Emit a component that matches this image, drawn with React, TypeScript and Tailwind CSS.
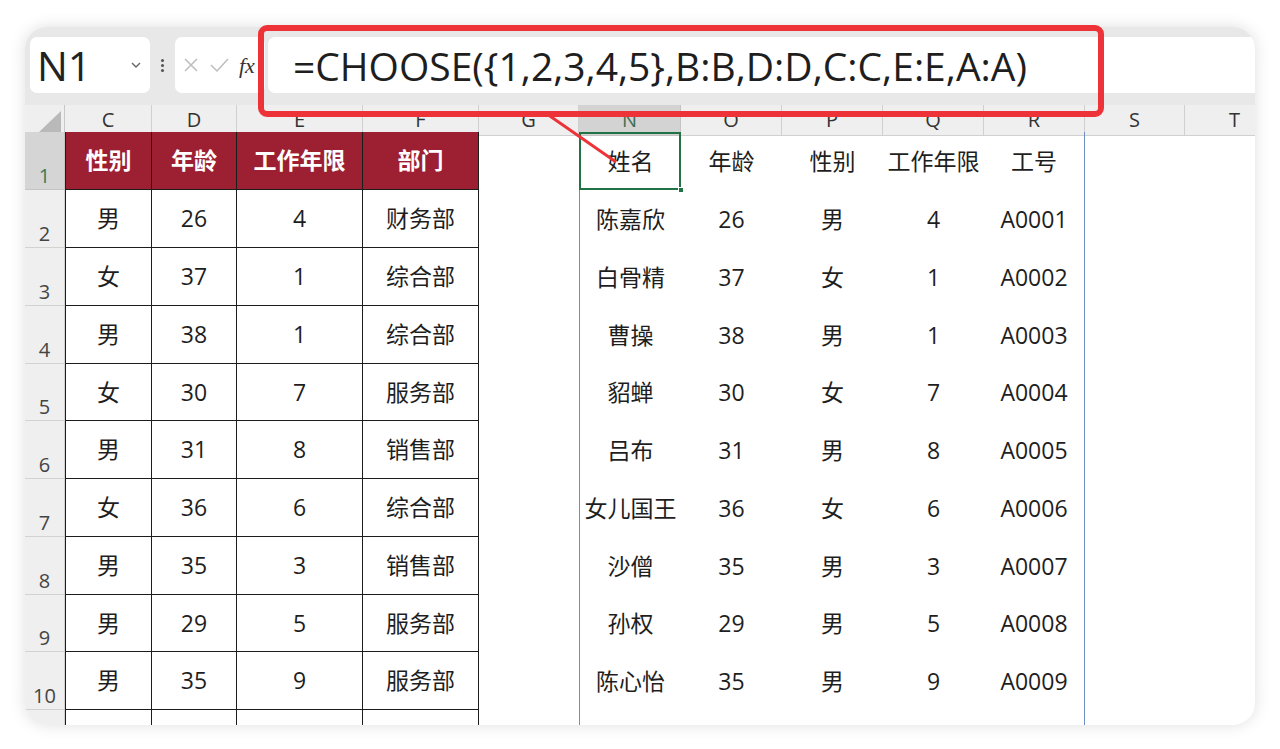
import React from 'react';

const leftRows = [
  ['男', '26', '4', '财务部'],
  ['女', '37', '1', '综合部'],
  ['男', '38', '1', '综合部'],
  ['女', '30', '7', '服务部'],
  ['男', '31', '8', '销售部'],
  ['女', '36', '6', '综合部'],
  ['男', '35', '3', '销售部'],
  ['男', '29', '5', '服务部'],
  ['男', '35', '9', '服务部'],
];

const rightRows = [
  ['陈嘉欣', '26', '男', '4', 'A0001'],
  ['白骨精', '37', '女', '1', 'A0002'],
  ['曹操', '38', '男', '1', 'A0003'],
  ['貂蝉', '30', '女', '7', 'A0004'],
  ['吕布', '31', '男', '8', 'A0005'],
  ['女儿国王', '36', '女', '6', 'A0006'],
  ['沙僧', '35', '男', '3', 'A0007'],
  ['孙权', '29', '男', '5', 'A0008'],
  ['陈心怡', '35', '男', '9', 'A0009'],
];

const colLetters = ['C', 'D', 'E', 'F', 'G', 'N', 'O', 'P', 'Q', 'R', 'S', 'T'];

const gridCols =
  'grid w-[1260px] grid-cols-[40px_87px_85px_126px_116px_100px_102px_101px_101px_101px_101px_100px_100px]';

const RowHead = ({ n, active }: { n: number; active?: boolean }) => (
  <div
    className={
      active
        ? 'flex items-end justify-center pb-[1px] bg-[#d5d5d5] border-r border-b border-[#c4c4c4] text-[20px] leading-[24px] text-[#3b7a56]'
        : 'flex items-end justify-center pb-[1px] bg-[#efefef] border-r border-b border-[#d2d2d2] text-[20px] leading-[24px] text-[#444]'
    }
  >
    {n}
  </div>
);

const LeftCell = ({ v, first }: { v: string; first?: boolean }) => (
  <div
    className={
      first
        ? 'flex items-center justify-center border-l border-r border-b border-[#1c1c1c] text-[23px] text-[#1e1e1e]'
        : 'flex items-center justify-center border-r border-b border-[#1c1c1c] text-[23px] text-[#1e1e1e]'
    }
  >
    {v}
  </div>
);

const RightCell = ({ v, edge }: { v: string; edge?: 'l' | 'r' }) => (
  <div
    className={
      edge === 'l'
        ? 'flex items-center justify-center border-l border-[#6f8fc4] text-[23px] text-[#1e1e1e]'
        : edge === 'r'
        ? 'flex items-center justify-center border-r border-[#6f8fc4] text-[23px] text-[#1e1e1e]'
        : 'flex items-center justify-center text-[23px] text-[#1e1e1e]'
    }
  >
    {v}
  </div>
);

export default function App() {
  return (
    <div className="relative w-[1280px] h-[749px] overflow-hidden bg-white font-['Open_Sans','Noto_Sans_CJK_SC',sans-serif]">
      <div className="ml-[25px] mt-[27px] w-[1230px] h-[698px] rounded-[22px] overflow-hidden bg-white shadow-[0_0_16px_rgba(0,0,0,0.13)] flex flex-col">
        {/* formula bar */}
        <div className="h-[78px] shrink-0 bg-[#e8e8e8] flex items-start pt-[10px] pl-[5px]">
          <div className="w-[120px] h-[56px] bg-white rounded-[7px] flex items-center pl-[7px] pr-[8px]">
            <span className="text-[41px] leading-none text-[#222]">N1</span>
            <svg className="ml-auto" width="12" height="8" viewBox="0 0 12 8">
              <path d="M2 2l4 4 4-4" fill="none" stroke="#666" strokeWidth="1.4" />
            </svg>
          </div>
          <div className="w-[25px] h-[56px] flex flex-col items-center justify-center gap-[2px]">
            <span className="w-[3px] h-[3px] rounded-full bg-[#555]" />
            <span className="w-[3px] h-[3px] rounded-full bg-[#555]" />
            <span className="w-[3px] h-[3px] rounded-full bg-[#555]" />
          </div>
          <div className="w-[90px] h-[56px] bg-white rounded-[7px] flex items-center pl-[8px] gap-[10px]">
            <svg width="16" height="16" viewBox="0 0 16 16">
              <path d="M2 2l12 12M14 2L2 14" stroke="#bdbdbd" strokeWidth="1.5" />
            </svg>
            <svg width="20" height="16" viewBox="0 0 20 16">
              <path d="M2 8l6 6L19 2" fill="none" stroke="#bdbdbd" strokeWidth="1.5" />
            </svg>
            <span className="font-['Liberation_Serif',serif] italic text-[22px] text-[#333]">fx</span>
          </div>
          <div className="ml-[3px] flex-1 h-[56px] bg-white rounded-l-[7px] flex items-center pl-[25px]">
            <span className="text-[39px] leading-none text-[#1e1e1e] whitespace-nowrap">
              =CHOOSE({'{'}1,2,3,4,5{'}'},B:B,D:D,C:C,E:E,A:A)
            </span>
          </div>
        </div>

        {/* column headers */}
        <div className={`${gridCols} h-[27px] shrink-0`}>
          <div className="bg-[#efefef] border-r border-b border-[#c8c8c8] flex items-end justify-end pr-[3px] pb-[3px]">
            <svg width="22" height="21" viewBox="0 0 22 21">
              <path d="M22 0V21H0Z" fill="#b9b9b9" />
            </svg>
          </div>
          {colLetters.map((c) => (
            <div
              key={c}
              className={
                c === 'N'
                  ? 'bg-[#d3d3d3] border-r border-b border-[#c4c4c4] flex items-center justify-center text-[20px] text-[#3f6e52]'
                  : 'bg-[#efefef] border-r border-b border-[#d0d0d0] flex items-center justify-center text-[20px] text-[#333]'
              }
            >
              {c}
            </div>
          ))}
        </div>

        {/* row 1 */}
        <div className={`${gridCols} h-[58px] shrink-0`}>
          <RowHead n={1} active />
          {['性别', '年龄', '工作年限', '部门'].map((h, i) => (
            <div
              key={h}
              className={
                i === 0
                  ? 'flex items-center justify-center bg-[#9d1f32] border-l border-r border-b border-[#1c1c1c] text-[23px] font-bold text-white'
                  : 'flex items-center justify-center bg-[#9d1f32] border-r border-b border-[#1c1c1c] text-[23px] font-bold text-white'
              }
            >
              {h}
            </div>
          ))}
          <div />
          <div className="relative flex items-center justify-center border-l border-[#6f8fc4] text-[23px] text-[#1e1e1e]">
            姓名
            <div className="absolute -left-[1px] top-0 right-0 bottom-0 border-2 border-[#217346]" />
            <div className="absolute -right-[3px] -bottom-[3px] w-[6px] h-[6px] bg-[#217346] border border-white" />
          </div>
          <RightCell v="年龄" />
          <RightCell v="性别" />
          <RightCell v="工作年限" />
          <RightCell v="工号" edge="r" />
          <div />
          <div />
        </div>

        {/* data rows */}
        {leftRows.map((r, i) => (
          <div key={i} className={`${gridCols} shrink-0 ${i === 3 || i === 7 ? 'h-[57px]' : 'h-[58px]'}`}>
            <RowHead n={i + 2} />
            <LeftCell v={r[0]} first />
            <LeftCell v={r[1]} />
            <LeftCell v={r[2]} />
            <LeftCell v={r[3]} />
            <div />
            <RightCell v={rightRows[i][0]} edge="l" />
            <RightCell v={rightRows[i][1]} />
            <RightCell v={rightRows[i][2]} />
            <RightCell v={rightRows[i][3]} />
            <RightCell v={rightRows[i][4]} edge="r" />
            <div />
            <div />
          </div>
        ))}

        {/* partial row 11 */}
        <div className={`${gridCols} flex-1`}>
          <div className="bg-[#efefef] border-r border-[#d2d2d2]" />
          <div className="border-l border-r border-[#1c1c1c]" />
          <div className="border-r border-[#1c1c1c]" />
          <div className="border-r border-[#1c1c1c]" />
          <div className="border-r border-[#1c1c1c]" />
          <div />
          <div className="border-l border-[#6f8fc4]" />
          <div />
          <div />
          <div />
          <div className="border-r border-[#6f8fc4]" />
          <div />
          <div />
        </div>
      </div>

      {/* callout */}
      <div className="absolute left-[258px] top-[25px] w-[846px] h-[92px] border-[6px] border-[#ee3338] rounded-[9px]" />
      <svg className="absolute left-0 top-0 pointer-events-none" width="1280" height="749">
        <line x1="547" y1="114" x2="616" y2="162" stroke="#ee3338" strokeWidth="3" />
      </svg>
    </div>
  );
}
